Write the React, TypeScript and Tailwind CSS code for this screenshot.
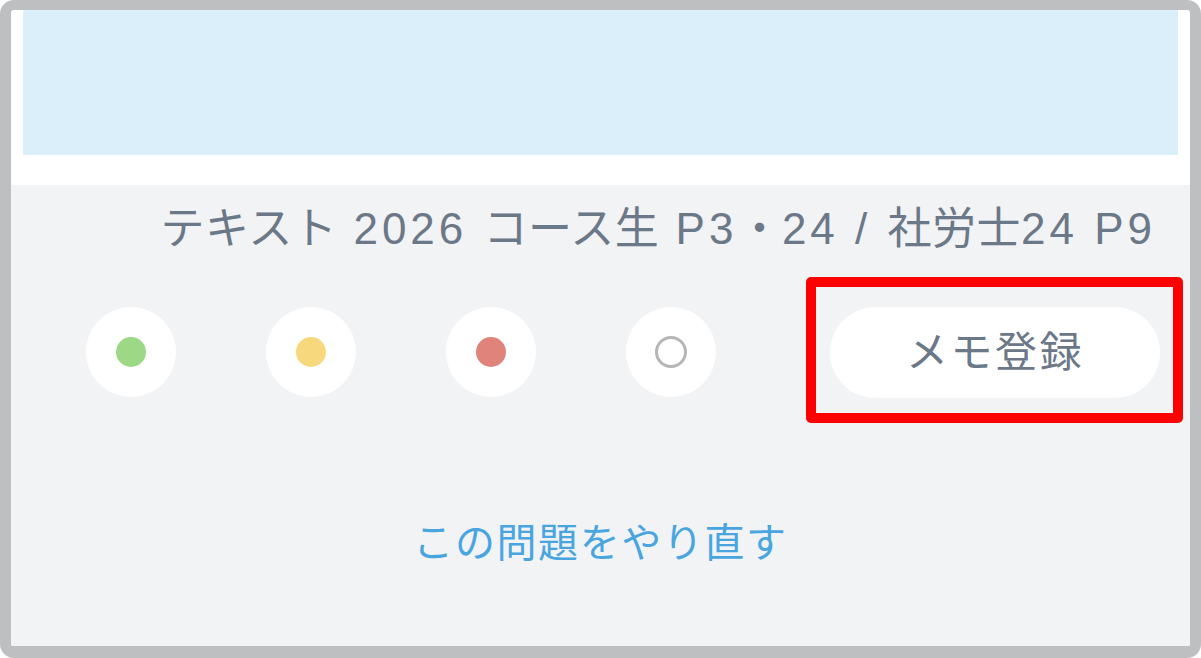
const font = { fontFamily: '"Liberation Sans", "Noto Sans CJK JP", sans-serif' };

function Mark({ dot }: { dot: React.ReactNode }) {
    return <div className="mt-[30px] flex h-[90px] w-[90px] shrink-0 items-center justify-center rounded-full bg-white">
        {dot}
    </div>
}

export default function App() {
    return <div className="h-[658px] w-[1201px] bg-white" style={font}>
        <div className="flex h-full flex-col overflow-hidden rounded-[14px] border-b-[12px] border-l-[11px] border-r-[11px] border-t-[10px] border-[#bebfc1]">
            <div className="bg-white px-[12px] pb-[30px]">
                <div className="h-[145px] bg-[#dbeffa]" />
            </div>
            <div className="flex flex-1 flex-col bg-[#f2f3f5]">
                <p className="pr-[34px] pt-[22px] text-right text-[44px] leading-[44px] tracking-[0.5px] text-[#6b7888] whitespace-nowrap">
                    テキスト<span className="tracking-[4px]"> 2026 </span>コース生<span className="tracking-[4px]"> P3</span>・<span className="tracking-[4px]">24 / </span>社労士<span className="tracking-[4px]">24 P9</span>
                </p>
                <div className="mt-[26px] flex items-start gap-[90px] pl-[75px]">
                    <Mark dot={<span className="h-[30px] w-[30px] rounded-full bg-[#9dd887]" />} />
                    <Mark dot={<span className="h-[30px] w-[30px] rounded-full bg-[#f8d87c]" />} />
                    <Mark dot={<span className="h-[30px] w-[30px] rounded-full bg-[#e0837a]" />} />
                    <Mark dot={<span className="h-[32px] w-[32px] rounded-full border-[3px] border-[#b5b5b5]" />} />
                    <div className="rounded-[5px] border-[10px] border-[#ff0000] pb-[15px] pl-[14px] pr-[13px] pt-[20px]">
                        <button className="flex h-[91px] w-[330px] items-center justify-center rounded-full bg-white text-[42px] leading-none tracking-[2.5px] text-[#6b7888]">
                            メモ登録
                        </button>
                    </div>
                </div>
                <p className="mt-[100px] text-center text-[40px] leading-[40px] tracking-[1.6px] text-[#48a5e0]">
                    この問題をやり直す
                </p>
            </div>
        </div>
    </div>
}
